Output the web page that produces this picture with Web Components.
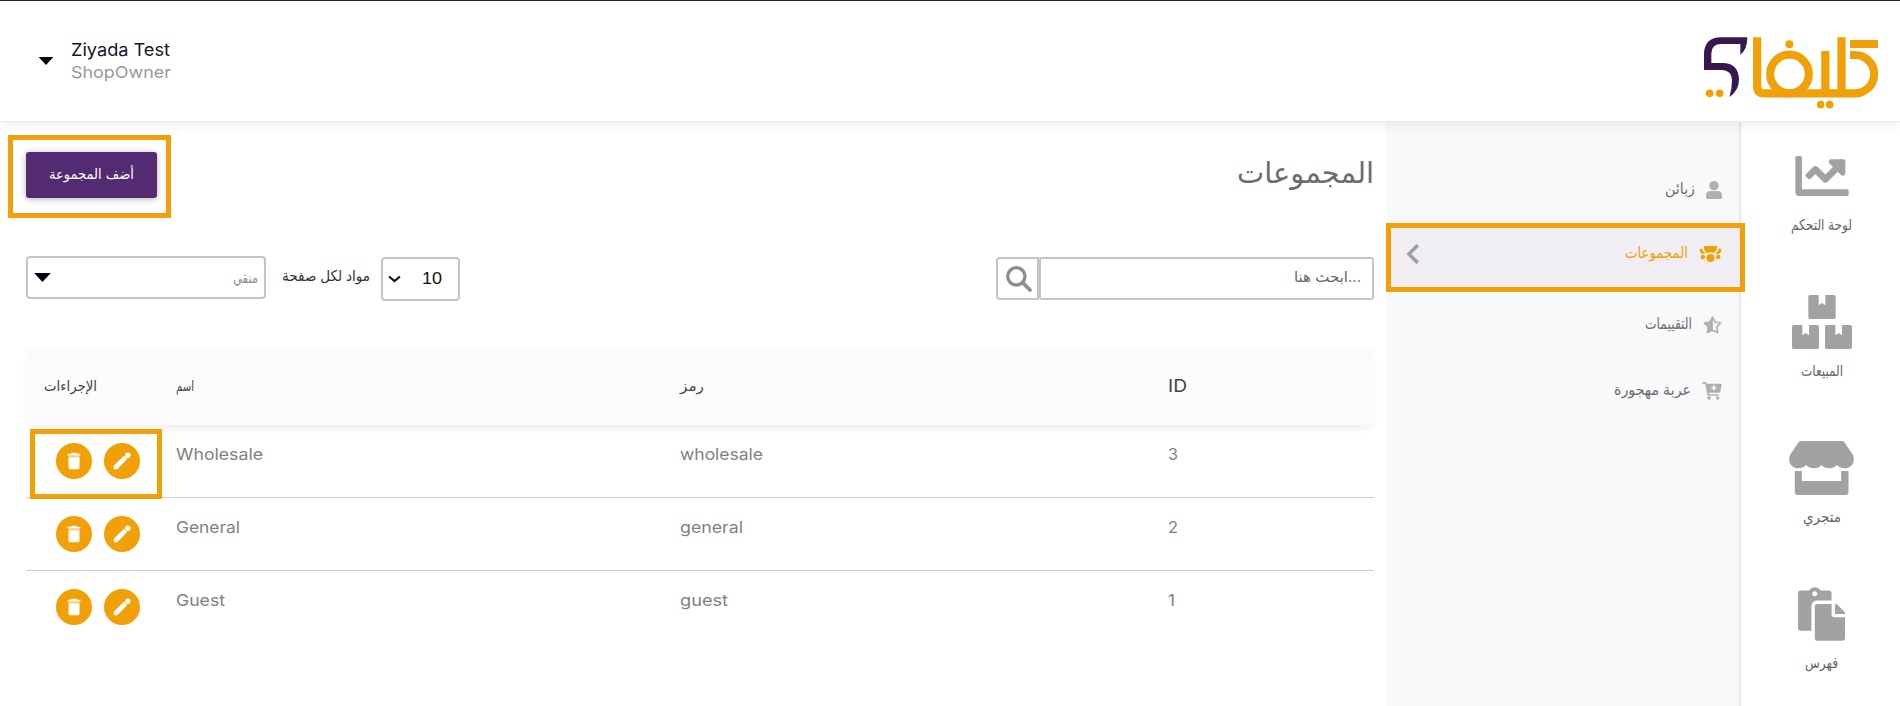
<!DOCTYPE html>
<html lang="ar">
<head>
<meta charset="utf-8">
<title>المجموعات</title>
<style>
    body {
        margin: 0;
        width: 1900px;
        height: 706px;
        overflow: hidden;
        background: #fff;
        font-family: Inter, "DejaVu Sans", sans-serif;
        color: #808080;
    }
</style>
</head>
<body>
<shop-app></shop-app>

<script>
(function () {
    const ICONS = {
        chart: ['0 64 512 384', '<path d="M496 384H64V80c0-8.84-7.16-16-16-16H16C7.16 64 0 71.16 0 80v336c0 17.67 14.33 32 32 32h464c8.84 0 16-7.16 16-16v-32c0-8.84-7.16-16-16-16zM464 96H345.94c-21.38 0-32.09 25.85-16.97 40.97l32.4 32.4L288 242.75l-73.37-73.37c-12.5-12.5-32.76-12.5-45.25 0l-68.69 68.69c-6.25 6.25-6.25 16.38 0 22.63l22.62 22.62c6.25 6.25 16.38 6.25 22.63 0L192 237.25l73.37 73.37c12.5 12.5 32.76 12.5 45.25 0l96-96 32.4 32.4c15.12 15.12 40.97 4.41 40.97-16.97V112c.01-8.84-7.15-16-15.99-16z"/>'],
        boxes: ['0 0 180 162', '<path d="M54 0H80V31L90 24 100 31V0H126Q131 0 131 5V67Q131 72 126 72H54Q49 72 49 67V5Q49 0 54 0zM5 90H31V121L41 114 51 121V90H76Q81 90 81 95V157Q81 162 76 162H5Q0 162 0 157V95Q0 90 5 90zM104 90H130V121L140 114 150 121V90H175Q180 90 180 95V157Q180 162 175 162H104Q99 162 99 157V95Q99 90 104 90z"/>'],
        store: ['0 0 194 162', '<path d="M35 0H159Q164 0 167 5L190 40C202 64 184 82 167 82Q153 82 143 72Q134 82 120 82Q106 82 97 72Q88 82 74 82Q60 82 51 72Q41 82 27 82C10 82-8 64 4 40L27 5Q30 0 35 0zM17 90H38V120H156V90H178V153Q178 162 169 162H26Q17 162 17 153z"/>'],
        paste: ['0 0 448 512', '<path d="M128 184c0-30.879 25.122-56 56-56h136V56c0-13.255-10.745-24-24-24h-80.61C204.306 12.89 183.637 0 160 0s-44.306 12.89-55.39 32H24C10.745 32 0 42.745 0 56v336c0 13.255 10.745 24 24 24h104V184zm32-144c13.255 0 24 10.745 24 24s-10.745 24-24 24-24-10.745-24-24 10.745-24 24-24zm184 248h104v200c0 13.255-10.745 24-24 24H184c-13.255 0-24-10.745-24-24V184c0-13.255 10.745-24 24-24h136v104c0 13.2 10.8 24 24 24zm104-38.059V256h-96v-96h6.059a24 24 0 0 1 16.97 7.029l65.941 65.941a24.002 24.002 0 0 1 7.03 16.971z"/>'],
        user: ['0 0 48 54', '<circle cx="24" cy="14" r="14"/><path d="M12 30H36Q48 32 48 44V50Q48 54 44 54H4Q0 54 0 50V44Q0 32 12 30z"/>'],
        group: ['0 0 68 48', '<path d="M17 0H51Q54 0 54 3Q54 14 48 18Q45 21 42 21Q34 16 26 21Q22 21 19 18Q14 14 14 3Q14 0 17 0z"/><circle cx="34" cy="36" r="12"/><circle cx="11" cy="33" r="7"/><circle cx="57" cy="33" r="7"/><path d="M4 8Q8 6 10 11L13 17Q19 18 18 23H10Q6 23 4 20L1 13Q1 9 4 8zM64 8Q60 6 58 11L55 17Q49 18 50 23H58Q62 23 64 20L67 13Q67 9 64 8z"/>'],
        star: ['0 0 58 54', '<path d="M29 3L37 18 54 21 42 33 45 50 29 43 13 50 16 33 4 21 21 18z" fill="none" stroke="currentColor" stroke-width="5" stroke-linejoin="round"/><path d="M30 2V44L13 51 16 33 3 21 21 18z"/>'],
        cart: ['0 0 60 54', '<path fill-rule="evenodd" d="M2 0H11Q14 0 15 5H57Q60 5 59 9L55 29Q54 32 50 32H20L21 37H50V41H17L9 5H2Q0 5 0 2.5Q0 0 2 0zM33 10V16H28V20H33V25H38V20H43V16H38V10z"/><circle cx="21" cy="48" r="5.5"/><circle cx="47" cy="48" r="5.5"/>'],
        search: ['0 0 76 78', '<circle cx="30" cy="31" r="26" fill="none" stroke="currentColor" stroke-width="10"/><path d="M49 50L71 72" stroke="currentColor" stroke-width="11" stroke-linecap="round"/>'],
        left: ['0 0 36 56', '<path d="M33 3L8 28 33 53" fill="none" stroke="currentColor" stroke-width="10"/>'],
        down: ['0 0 36 22', '<path d="M3 4L18 17 33 4" fill="none" stroke="currentColor" stroke-width="6"/>'],
        caret: ['0 0 48 26', '<path d="M0 0H48L24 26z"/>'],
        trash: ['0 0 24 24', '<path d="M6 19c0 1.100.9 2 2 2h8c1.100 0 2-.9 2-2V8H6v11zM19 4h-3.500l-1-1h-5l-1 1H5v2h14V4z"/><path d="M6 6H18V8H6z" opacity=".5"/>'],
        pencil: ['0 0 24 24', '<path d="M3 17.250V21h3.750L17.810 9.940l-3.750-3.750L3 17.250z"/><circle cx="18.400" cy="5.700" r="2.900"/>']
    };

    function define(name, html, setup) {
        const template = document.createElement('template');
        template.innerHTML = html;

        customElements.define(name, class extends HTMLElement {
            connectedCallback() {
                if (this.shadowRoot) return;
                const root = this.attachShadow({ mode: 'open' });
                root.appendChild(template.content.cloneNode(true));
                if (setup) setup(this, root);
            }
        });
    }

    define('shop-icon', `
<style>
    :host { display: block; flex: none; }
    svg { display: block; width: 100%; height: 100%; fill: currentColor; }
</style>
<svg></svg>`, (el, root) => {
        const [viewBox, shapes] = ICONS[el.getAttribute('name')];
        const svg = root.querySelector('svg');
        svg.setAttribute('viewBox', viewBox);
        svg.innerHTML = shapes;
        el.style.width = el.getAttribute('w') + 'px';
        el.style.height = el.getAttribute('h') + 'px';
    });

    // one line of text squeezed or stretched to the given width
    define('fit-text', `
<style>
    :host { display: block; flex: none; white-space: nowrap; line-height: 24px; }
    span { display: block; width: max-content; transform-origin: 0 50%; }
</style>
<span><slot></slot></span>`, (el, root) => {
        const span = root.querySelector('span');
        const width = +el.getAttribute('width');
        el.style.width = width + 'px';
        const natural = span.getBoundingClientRect().width;
        if (natural) span.style.transform = `scaleX(${width / natural})`;
    });

    define('shop-logo', `
<style>
    :host { display: block; }
    svg { display: block; }
</style>
<svg width="174" height="72" viewBox="132 110 522 216">
    <path fill="#36174f" d="M262 111H184Q132 111 132 163V209H188Q215 211 216 240Q216 266 208 290Q237 270 237 238Q235 190 192 188H154V160Q154 131 184 131H241V163Q262 148 262 111z"/>
    <g fill="none" stroke="#f2a007" stroke-width="24.5">
        <path d="M291.5 111V258Q291.5 279 312 279H585A57.5 57.5 0 0 0 585 164H570M496 152V279M544.5 111V279M570 131H654"/>
        <circle cx="388.5" cy="221" r="58"/>
    </g>
    <g fill="#f2a007">
        <circle cx="388" cy="131.5" r="12"/>
        <circle cx="149" cy="279" r="11.5"/><circle cx="179" cy="279" r="11.5"/>
        <circle cx="482" cy="313" r="11.5"/><circle cx="509" cy="313" r="11.5"/>
    </g>
</svg>`);

    define('shop-header', `
<style>
    :host {
        display: flex;
        justify-content: space-between;
        align-items: flex-start;
        box-sizing: border-box;
        height: 122px;
        padding: 36px 22px 0 38px;
        border-top: 1px solid #222;
        border-bottom: 1px solid #ececec;
        background: #fff;
        position: relative;
        z-index: 1;
        box-shadow: 0 2px 12px rgba(0, 0, 0, .08);
    }
    .user { display: flex; gap: 17px; }
    shop-icon { color: #000012; margin-top: 20px; }
    .name { color: #15152b; font-size: 17.5px; margin-top: 1px; }
    .role { color: #999; font-size: 16.5px; margin-top: -2px; }
</style>
<div class="user">
    <shop-icon name="caret" w="16" h="8"></shop-icon>
    <div>
        <fit-text class="name" width="99">Ziyada Test</fit-text>
        <fit-text class="role" width="100">ShopOwner</fit-text>
    </div>
</div>
<shop-logo></shop-logo>`);

    define('menu-item', `
<style>
    :host {
        display: flex;
        align-items: center;
        justify-content: flex-end;
        gap: 11px;
        box-sizing: border-box;
        height: 66px;
        padding: 0 17px 0 20px;
        color: #6f6f6f;
        font-size: 15.5px;
    }
    :host([active]) { height: 69px; background: #f1eef3; color: #f2a007; padding-bottom: 8px; }
    .arrow { display: none; color: #a0a0a0; margin-right: auto; }
    :host([active]) .arrow { display: block; }
    ::slotted(fit-text) { margin-top: -2px; }
    ::slotted(shop-icon) { color: #b0b0b0; }
    :host([active]) ::slotted(shop-icon) { color: #f2a007; }
</style>
<shop-icon class="arrow" name="left" w="13" h="20"></shop-icon>
<slot></slot>`);

    define('side-menu', `
<style>
    :host {
        display: block;
        box-sizing: border-box;
        width: 355px;
        padding-top: 35px;
        background: #f8f9fb;
        border-right: 2px solid #e8e8ea;
    }
</style>
<menu-item><fit-text width="30">زبائن</fit-text><shop-icon name="user" w="16" h="18"></shop-icon></menu-item>
<menu-item active><fit-text width="63">المجموعات</fit-text><shop-icon name="group" w="23" h="16"></shop-icon></menu-item>
<menu-item><fit-text width="47">التقييمات</fit-text><shop-icon name="star" w="19" h="18"></shop-icon></menu-item>
<menu-item><fit-text width="77">عربة مهجورة</fit-text><shop-icon name="cart" w="20" h="18"></shop-icon></menu-item>`);

    define('nav-item', `
<style>
    :host { display: flex; flex-direction: column; align-items: center; height: 146px; font-size: 15px; color: #666; }
    .icon { display: flex; align-items: center; justify-content: center; width: 64px; height: 64px; margin-bottom: 5px; color: #a2a2a2; }
</style>
<div class="icon"><slot name="icon"></slot></div>
<slot></slot>`);

    define('main-nav', `
<style>
    :host { display: block; width: 159px; padding: 22px 0 0 2px; box-sizing: border-box; background: #fff; }
</style>
<nav-item><shop-icon slot="icon" name="chart" w="54" h="40"></shop-icon><fit-text width="61">لوحة التحكم</fit-text></nav-item>
<nav-item><shop-icon slot="icon" name="boxes" w="60" h="54"></shop-icon><fit-text width="42">المبيعات</fit-text></nav-item>
<nav-item><shop-icon slot="icon" name="store" w="65" h="54"></shop-icon><fit-text width="38">متجري</fit-text></nav-item>
<nav-item><shop-icon slot="icon" name="paste" w="47" h="54"></shop-icon><fit-text width="33">فهرس</fit-text></nav-item>`);

    define('page-title', `
<style>
    :host { display: flex; justify-content: space-between; align-items: center; height: 46px; }
    button {
        display: flex;
        align-items: center;
        justify-content: center;
        width: 131px;
        height: 46px;
        padding: 0 0 2px;
        border: 0;
        border-radius: 3px;
        background: #542a72;
        color: #fff;
        font: 14px "DejaVu Sans", sans-serif;
        box-shadow: 0 1px 6px rgba(0, 0, 0, .3);
    }
    h1 { margin: -5px 0 0; font-size: 29px; font-weight: 400; color: #6c6c6c; }
    h1 fit-text { line-height: 46px; }
</style>
<button><fit-text width="85">أضف المجموعة</fit-text></button>
<h1><fit-text width="137">المجموعات</fit-text></h1>`);

    define('table-tools', `
<style>
    :host { display: flex; align-items: flex-start; height: 45px; margin-top: 58px; font-size: 14px; }
    .box {
        display: flex;
        align-items: center;
        justify-content: space-between;
        box-sizing: border-box;
        height: 43px;
        border: 2px solid #c5c5c5;
        border-radius: 4px;
        background: #fff;
    }
    .filter { width: 240px; padding: 0 6px; color: #8a8a8a; }
    .filter shop-icon { color: #000012; }
    .label { margin: 8px 11px 0 16px; color: #333; font-size: 15px; }
    .size { width: 79px; height: 44px; margin-top: 1px; padding: 0 16px 0 5px; color: #111; font: 17px "Liberation Sans", sans-serif; }
    .search { display: flex; margin: 1px 0 0 auto; }
    .find { width: 43px; padding-left: 2px; justify-content: center; color: #8e8e8e; border-radius: 4px 0 0 4px; }
    .query { width: 335px; padding: 0 11px 4px; justify-content: flex-end; color: #666; border-radius: 3px; }
</style>
<div class="box filter"><shop-icon name="caret" w="17" h="9"></shop-icon><fit-text width="25">منقي</fit-text></div>
<fit-text class="label" width="88">مواد لكل صفحة</fit-text>
<div class="box size"><shop-icon name="down" w="13" h="8"></shop-icon><fit-text width="20">10</fit-text></div>
<div class="search">
    <div class="box find"><shop-icon name="search" w="26" h="26"></shop-icon></div>
    <div class="box query"><fit-text width="67">ابحث هنا...</fit-text></div>
</div>`);

    define('row-actions', `
<style>
    :host { display: flex; gap: 12px; padding: 18px 0 0 30px; }
    div { display: flex; align-items: center; justify-content: center; width: 36px; height: 36px; border-radius: 50%; background: #f2a007; color: #fff; }
</style>
<div><shop-icon name="trash" w="22" h="22"></shop-icon></div>
<div><shop-icon name="pencil" w="22" h="22"></shop-icon></div>`);

    define('group-table', `
<style>
    :host { display: block; margin-top: 46px; }
    .row { display: grid; grid-template-columns: 150px 504px 488px 1fr; height: 73px; box-sizing: border-box; border-bottom: 1px solid #cfcfcf; font-size: 16px; }
    .row:last-child { border: 0; }
    .row > fit-text { margin-top: 17px; }
    .head { height: 78px; align-items: center; border: 0; background: #fbfbfb; color: #444; box-shadow: 0 6px 8px -3px rgba(0, 0, 0, .07); font-size: 14px; }
    .head > fit-text { margin-top: 0; }
    .head > :first-child { margin-left: 18px; }
    .head > :last-child { font-size: 17px; }
</style>
<div class="row head">
    <fit-text width="53">الإجراءات</fit-text>
    <fit-text width="18">اسم</fit-text>
    <fit-text width="24">رمز</fit-text>
    <fit-text width="19">ID</fit-text>
</div>
<div class="row">
    <row-actions></row-actions>
    <fit-text width="87">Wholesale</fit-text>
    <fit-text width="83">wholesale</fit-text>
    <fit-text width="10">3</fit-text>
</div>
<div class="row">
    <row-actions></row-actions>
    <fit-text width="64">General</fit-text>
    <fit-text width="63">general</fit-text>
    <fit-text width="10">2</fit-text>
</div>
<div class="row">
    <row-actions></row-actions>
    <fit-text width="49">Guest</fit-text>
    <fit-text width="48">guest</fit-text>
    <fit-text width="7">1</fit-text>
</div>`);

    // frame laid over a part of the page to point it out
    define('mark-frame', `
<style>
    :host { display: block; position: absolute; z-index: 2; box-sizing: border-box; border: 5px solid #f2a007; pointer-events: none; }
</style>`, (el) => {
        const [x, y, w, h] = el.getAttribute('area').split(' ');
        Object.assign(el.style, { left: x + 'px', top: y + 'px', width: w + 'px', height: h + 'px' });
    });

    define('shop-app', `
<style>
    :host { display: block; position: relative; height: 706px; overflow: hidden; }
    .body { display: flex; height: 584px; }
    main { box-sizing: border-box; width: 1386px; padding: 30px 12px 0 26px; }
</style>
<shop-header></shop-header>
<div class="body">
    <main>
        <page-title></page-title>
        <table-tools></table-tools>
        <group-table></group-table>
    </main>
    <side-menu></side-menu>
    <main-nav></main-nav>
</div>
<mark-frame area="8 135 163 83"></mark-frame>
<mark-frame area="30 429 132 70"></mark-frame>
<mark-frame area="1386 223 359 69"></mark-frame>`);
})();
</script>
</body>
</html>
